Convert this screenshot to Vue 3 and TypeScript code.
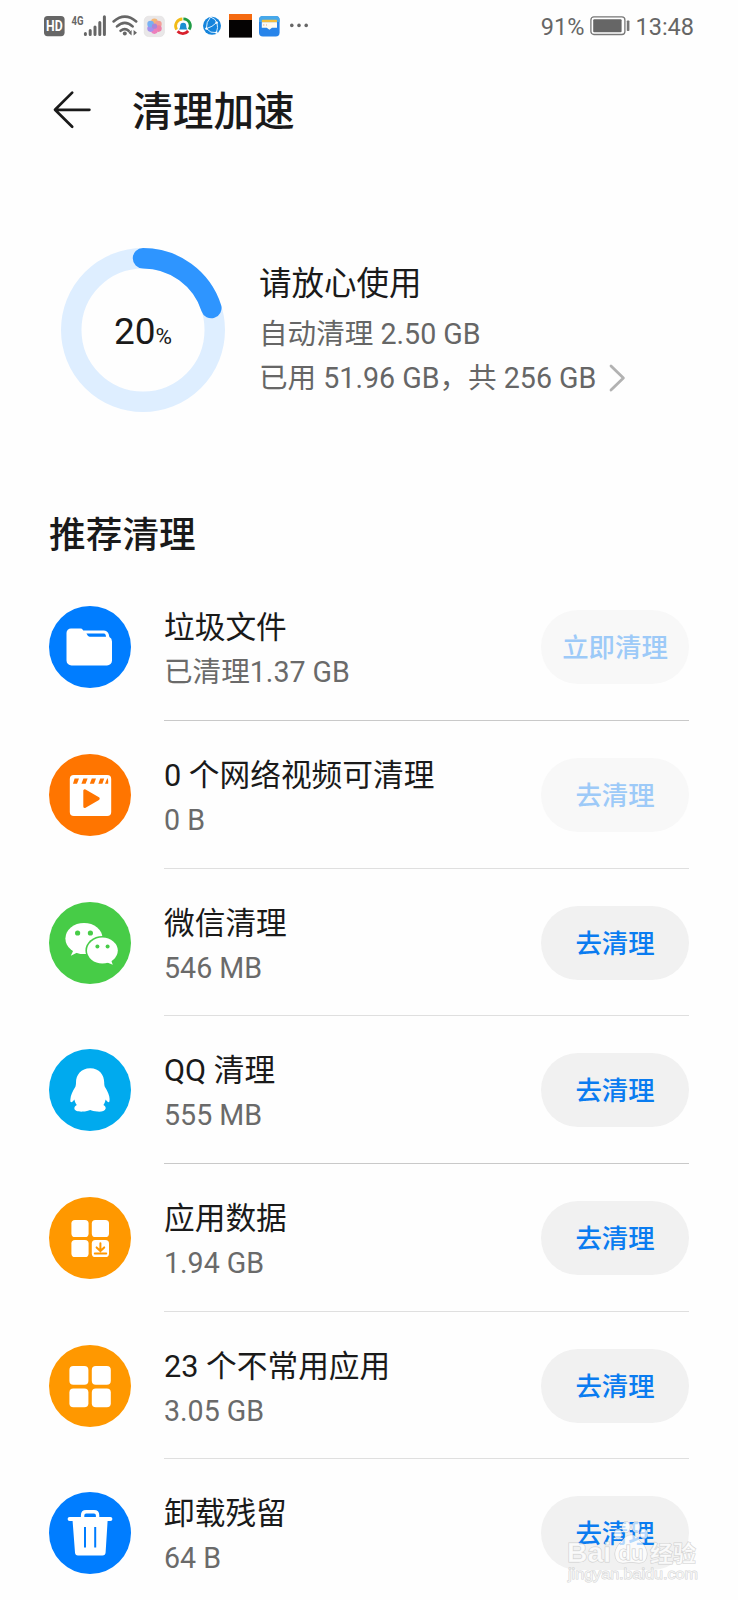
<script setup lang="ts">
interface CleanItem {
  id: string
  title: string
  size: string
  action: string
  color: string
  enabled: boolean
  softLine: boolean
}

const items: CleanItem[] = [
  { id: 'folder', title: '垃圾文件', size: '已清理1.37 GB', action: '立即清理', color: '#007dff', enabled: false, softLine: false },
  { id: 'video', title: '0 个网络视频可清理', size: '0 B', action: '去清理', color: '#ff7500', enabled: false, softLine: true },
  { id: 'wechat', title: '微信清理', size: '546 MB', action: '去清理', color: '#47cc47', enabled: true, softLine: true },
  { id: 'qq', title: 'QQ 清理', size: '555 MB', action: '去清理', color: '#00aaee', enabled: true, softLine: false },
  { id: 'data', title: '应用数据', size: '1.94 GB', action: '去清理', color: '#ff9800', enabled: true, softLine: true },
  { id: 'apps', title: '23 个不常用应用', size: '3.05 GB', action: '去清理', color: '#ff9800', enabled: true, softLine: true },
  { id: 'trash', title: '卸载残留', size: '64 B', action: '去清理', color: '#007dff', enabled: true, softLine: false },
]

const usedPercent = 20
const radius = 71.75
const circumference = 2 * Math.PI * radius
const dash = `${(circumference * usedPercent) / 100} ${circumference}`
</script>

<template>
  <div class="screen">
    <div class="status">
      <div class="tray">
        <svg width="26" height="28" viewBox="44 12 26 28">
          <rect x="44" y="16" width="20.6" height="20.2" rx="3.6" fill="#666" />
          <text x="46.1" y="31.3" class="hd" textLength="16.6" lengthAdjust="spacingAndGlyphs">HD</text>
        </svg>
        <svg width="40" height="28" viewBox="70 12 40 28">
          <text x="71.6" y="24.6" class="net" textLength="12" lengthAdjust="spacingAndGlyphs">4G</text>
          <g stroke="#666" stroke-width="3" stroke-linecap="round">
            <path d="M85.4 33.6v.8M90.2 30.6v3.8M95 27v7.4M99.8 22.4v12M104.4 16.8v17.6" />
          </g>
        </svg>
        <svg width="32" height="28" viewBox="110 12 32 28">
          <g fill="none" stroke="#666" stroke-width="2.6" stroke-linecap="round">
            <path d="M113.6 21.4q11.2-9.6 22.6 0M117 26.4q7.8-7 15.6 0M120.6 30.8q4.3-3.4 8 0" />
          </g>
          <circle cx="124.8" cy="33.4" r="2" fill="#666" />
          <path d="M128.400 32.800l3.200-2.800v5.600zM133.600 30l3.400 2.800-3.400 2.800z" fill="#666" />
        </svg>
        <svg width="28" height="28" viewBox="142 12 28 28">
          <rect x="144.2" y="16.2" width="20.2" height="20.4" rx="4.4" fill="#e9e7e8" stroke="#dcdada" stroke-width=".5" />
          <g opacity=".85">
            <circle cx="154.4" cy="21.8" r="3.3" fill="#f7ad62" />
            <circle cx="158.4" cy="24" r="3.3" fill="#f59389" />
            <circle cx="158.4" cy="28.6" r="3.3" fill="#ef6f9d" />
            <circle cx="154.4" cy="30.6" r="3.3" fill="#ee6db5" />
            <circle cx="150.6" cy="28.6" r="3.3" fill="#9b83ef" />
            <circle cx="150.6" cy="24" r="3.3" fill="#64a7f5" />
            <circle cx="154.5" cy="26.2" r="2.6" fill="#a176d6" />
          </g>
        </svg>
        <svg width="28" height="28" viewBox="170 12 28 28">
          <g fill="none" stroke-width="2.8">
            <path d="M176.6 29.6A7 7 0 0 1 182.4 19" stroke="#f2bb16" />
            <path d="M183.4 18.8A7 7 0 0 1 189.2 29.6" stroke="#1f9b45" />
            <path d="M177.6 31.2A7 7 0 0 0 188.2 31" stroke="#d8202c" />
          </g>
          <path d="M179 29.4q1.200-1 1.200-3.600a3 3 0 0 1 6 0q0 2.600 1.200 3.600z" fill="#1b8fd2" />
        </svg>
        <svg width="29" height="28" viewBox="198 12 29 28">
          <circle cx="212" cy="25.8" r="9" fill="#1584dc" />
          <g fill="none" stroke="#d9efff" stroke-width="1">
            <path d="M210.6 17q-4.6 5-4.2 11.600 4 5 10 4M210.600 17q5 1.600 6.400 6t-.6 9.600M206.400 28.600q6-1.600 10.200-6" />
          </g>
          <circle cx="206.400" cy="28.600" r="1.200" fill="#fff" />
          <circle cx="216.600" cy="22.600" r="1.200" fill="#fff" />
          <circle cx="216.400" cy="32.600" r="1.200" fill="#fff" />
        </svg>
        <svg width="29" height="28" viewBox="227 12 29 28">
          <rect x="229" y="14" width="23" height="23.600" fill="#050303" />
          <rect x="229" y="14" width="23" height="6" fill="#f56a10" />
        </svg>
        <svg width="30" height="28" viewBox="256 12 30 28">
          <rect x="259" y="16" width="20.600" height="20.400" rx="4" fill="#2784ea" />
          <path d="M259 22v-2a4 4 0 0 1 4-4h12.600a4 4 0 0 1 4 4v2z" fill="#46a8ea" />
          <rect x="261.800" y="19.800" width="15.200" height="2.600" rx="1" fill="#f3bd3e" />
          <path d="M261.800 22.200h15.200v5.600h-5l-2.600 2-2.600-2h-5z" fill="#fffaf0" />
          <path d="M263 25h1.400M266 25h1" stroke="#e0a78c" stroke-width="1" />
        </svg>
        <svg width="26" height="28" viewBox="286 12 26 28">
          <g fill="#666">
            <circle cx="291.800" cy="25.400" r="1.800" />
            <circle cx="299" cy="25.400" r="1.800" />
            <circle cx="306.200" cy="25.400" r="1.800" />
          </g>
        </svg>
      </div>
      <div class="power">
        <span class="battery-text">91%</span>
        <svg class="battery" width="40" height="20" viewBox="0 0 40 20">
          <rect x=".9" y=".9" width="34" height="17.600" rx="3" fill="#fff" stroke="#777" stroke-width="1.300" />
          <rect x="3.200" y="3.200" width="28.400" height="13" rx="1" fill="#666" />
          <rect x="36.800" y="4.400" width="2.600" height="10.600" rx=".8" fill="#777" />
        </svg>
        <span class="time">13:48</span>
      </div>
    </div>

    <header class="header">
      <svg class="back" width="40" height="40" viewBox="0 0 40 40">
        <path d="M37.400 19.800H3.200M20.200 2.600L3 19.800l17.200 17" fill="none" stroke="#1a1a1a" stroke-width="2.700" stroke-linecap="round" stroke-linejoin="round" />
      </svg>
      <h1>清理加速</h1>
    </header>

    <section class="summary">
      <div class="gauge">
        <svg width="164" height="164" viewBox="0 0 164 164">
          <circle cx="82" cy="82" :r="radius" fill="none" stroke="#deeeff" stroke-width="20.500" />
          <circle cx="82" cy="82" :r="radius" fill="none" stroke="#2e95ff" stroke-width="20.500" stroke-linecap="round" :stroke-dasharray="dash" transform="rotate(-90 82 82)" />
        </svg>
        <div class="gauge-label"><span class="num">{{ usedPercent }}</span><span class="pct">%</span></div>
      </div>
      <div class="facts">
        <div class="headline">请放心使用</div>
        <div class="fact">自动清理 2.50 GB</div>
        <div class="fact">
          <span>已用 51.96 GB，共 256 GB</span>
          <svg class="chevron" width="17" height="28" viewBox="0 0 17 28">
            <path d="M2 2l12.400 12L2 26" fill="none" stroke="#b2b2b2" stroke-width="2.800" stroke-linecap="round" stroke-linejoin="round" />
          </svg>
        </div>
      </div>
    </section>

    <h2>推荐清理</h2>

    <ul class="list">
      <li v-for="item in items" :key="item.id" class="row">
        <svg class="icon" width="82" height="82" viewBox="0 0 82 82">
          <circle cx="41" cy="41" r="41" :fill="item.color" />
          <g v-if="item.id === 'folder'">
            <path d="M17.500 27a4.500 4.500 0 0 1 4.500-4.500h9.500q1.600 0 2.400 1.400l.4.600H55q4.600 0 5.400 6.500 2.600 1.200 2.600 4.500v19a5 5 0 0 1-5 5H22.500a5 5 0 0 1-5-5z" fill="#fff" />
            <path d="M37.400 27.600H55q1.600 0 2 3.200H40.600q-1.800-.2-3.200-3.200z" fill="#007dff" />
          </g>
          <g v-else-if="item.id === 'video'">
            <rect x="20.800" y="21" width="41.400" height="41" rx="4" fill="#fff" />
            <path d="M25.600 24.600h4.400l-2 5.200h-4zM34.400 24.600h4.200l-2 5.200h-4.200zM42.800 24.600H47l-2 5.200h-4.200zM51.200 24.600h4l-1.800 5.200h-4zM58.200 24.600h.6q.6 2.400.400 5.200H56z" fill="#ff7500" />
            <path d="M35.800 36.800v15.600l13.400-7.800z" fill="#ff7500" stroke="#ff7500" stroke-width="3" stroke-linejoin="round" />
          </g>
          <g v-else-if="item.id === 'wechat'">
            <ellipse cx="35" cy="36.500" rx="18.600" ry="15.600" fill="#fff" />
            <path d="M25 47l-3.200 6.800 8-4z" fill="#fff" />
            <ellipse cx="53.400" cy="48.600" rx="17" ry="14.600" fill="#47cc47" />
            <ellipse cx="53.400" cy="48.600" rx="15.400" ry="13" fill="#fff" />
            <path d="M57 60l6.800 2.800-2.400-6.600z" fill="#fff" />
            <g fill="#47cc47">
              <circle cx="28.600" cy="31" r="2.600" /><circle cx="41.400" cy="31" r="2.600" />
              <circle cx="48.400" cy="44.400" r="2" /><circle cx="58.600" cy="44.400" r="2" />
            </g>
          </g>
          <g v-else-if="item.id === 'qq'">
            <path d="M41.200 19.200c9.200 0 14 6.600 14 14.400 0 1.800.2 3 .6 4.200 2.800 4 4.800 9 4.800 12.200 0 2-.2 3.200-.8 3.200-.8 0-2.200-1.400-3.200-2.800-.4 2-1 4-2.200 5.600 1.800 1 2.600 2.200 2.200 3.800-.6 2.200-4.400 3.200-8.400 2.800-3-.2-5.200-1-7-1.600-1.800.8-4.200 1.600-7.600 1.600-4 .2-7.800-.6-8.200-2.800-.2-1.800.8-3 2.400-3.800-1.200-1.600-2-3.600-2.400-5.600-1 1.600-2.400 2.800-3.200 2.800s-1-1.200-.8-3c.2-3.400 2.200-8.200 5-12.400.4-1.200.6-2.400.6-4.200 0-7.800 5-14.400 14.200-14.400z" fill="#fff" />
          </g>
          <g v-else-if="item.id === 'data'">
            <g fill="#fff">
              <rect x="22.400" y="23" width="17.200" height="17" rx="3.600" />
              <rect x="42.800" y="23" width="17.200" height="17" rx="3.600" />
              <rect x="22.400" y="43" width="17.200" height="17" rx="3.600" />
              <rect x="42.800" y="43" width="17.200" height="17" rx="3.600" />
            </g>
            <path d="M51.400 46.200v7M47.600 50.400l3.800 3.600 3.800-3.600M45.800 56.600h11.400" fill="none" stroke="#ff9800" stroke-width="2" stroke-linecap="round" />
          </g>
          <g v-else-if="item.id === 'apps'" fill="#fff">
            <rect x="20.400" y="21" width="19" height="18.800" rx="4" />
            <rect x="42.800" y="21" width="19" height="18.800" rx="4" />
            <rect x="20.400" y="43.400" width="19" height="18.800" rx="4" />
            <rect x="42.800" y="43.400" width="19" height="18.800" rx="4" />
          </g>
          <g v-else>
            <path d="M20.600 25h40.800a2 2 0 0 1 0 4h-2.800l-2 31.600q-.2 3-3.200 3H29q-2.800 0-3-3L23.600 29h-3a2 2 0 0 1 0-4z" fill="#fff" />
            <path d="M33.600 26v-2.600q0-3.600 3.600-3.600h7.800q3.600 0 3.600 3.600V26" fill="none" stroke="#fff" stroke-width="3.400" />
            <path d="M36 35v20.600M46.200 35v20.600" stroke="#007dff" stroke-width="2" />
          </g>
        </svg>
        <div class="body" :class="{ soft: item.softLine }">
          <div class="info">
            <div class="title">{{ item.title }}</div>
            <div class="size">{{ item.size }}</div>
          </div>
          <button class="action" :class="{ disabled: !item.enabled }" type="button">{{ item.action }}</button>
        </div>
      </li>
    </ul>

    <svg class="watermark" width="140" height="70" viewBox="0 0 140 70">
      <g fill="#fff" fill-opacity=".7" stroke="#aaa" stroke-opacity=".5" stroke-width="1" paint-order="stroke">
        <ellipse cx="64" cy="6" rx="4" ry="5.400" />
        <ellipse cx="74" cy="6" rx="4" ry="5.400" />
        <ellipse cx="56" cy="13" rx="3.600" ry="4.800" />
        <ellipse cx="82" cy="13" rx="3.600" ry="4.800" />
        <path d="M69 14q5 0 8 5 8 7 8 14 0 9-8 9-8-1.400-16 0-8 0-8-9 0-7 8-14 3-5 8-5z" />
        <text x="5" y="41" class="wm-brand" textLength="44" lengthAdjust="spacingAndGlyphs">Bai</text>
        <text x="56.500" y="38.500" class="wm-du" textLength="25" lengthAdjust="spacingAndGlyphs">du</text>
        <text x="88" y="41" class="wm-cn" textLength="46" lengthAdjust="spacingAndGlyphs">经验</text>
        <text x="6" y="57.500" class="wm-url" textLength="130" lengthAdjust="spacingAndGlyphs">jingyan.baidu.com</text>
      </g>
    </svg>
  </div>
</template>

<style>
html,
body {
  margin: 0;
  background: #fefefe;
}
</style>

<style scoped>
.screen {
  position: relative;
  box-sizing: border-box;
  width: 738px;
  height: 1600px;
  overflow: hidden;
  background: #fefefe;
  color: #1a1a1a;
  font-family: Roboto, "Noto Sans CJK SC", sans-serif;
}
svg {
  display: block;
  flex: none;
}
.status {
  display: flex;
  justify-content: space-between;
  height: 52px;
  padding: 0 44px;
  color: #666;
}
.tray {
  display: flex;
  padding-top: 12px;
}
.hd {
  font: 700 15px Roboto, sans-serif;
  fill: #fff;
}
.net {
  font: 700 12px Roboto, sans-serif;
  fill: #666;
}
.power {
  display: flex;
  align-items: center;
  font-size: 23.500px;
  line-height: 52px;
}
.battery-text {
  padding-top: 1px;
}
.time {
  padding-top: 1px;
}
.battery {
  margin: 0 5px 0 6px;
}
.header {
  display: flex;
  align-items: center;
  height: 116px;
  padding-left: 52px;
}
.back {
  margin: -1px 40px 0 0;
}
h1,
h2 {
  margin: 0;
  font-weight: 500;
}
h1 {
  padding-top: 4px;
  font-size: 40.700px;
  line-height: 60px;
}
.summary {
  display: flex;
  align-items: center;
  height: 324px;
  padding-left: 61px;
}
.gauge {
  display: grid;
  place-items: center;
  width: 164px;
  height: 164px;
}
.gauge > * {
  grid-area: 1 / 1;
}
.gauge-label {
  display: flex;
  align-items: baseline;
  padding-top: 8px;
  line-height: 44px;
}
.num {
  font-size: 37px;
}
.pct {
  font-size: 22.500px;
}
.facts {
  margin-left: 34px;
  padding-bottom: 4px;
}
.headline {
  font-size: 32.500px;
  line-height: 56px;
}
.fact {
  display: flex;
  align-items: center;
  height: 44px;
  color: #666;
  font-size: 28.600px;
  line-height: 44px;
}
.chevron {
  margin-left: 13px;
}
h2 {
  height: 81.400px;
  padding-left: 49px;
  font-size: 36.700px;
  line-height: 88px;
}
.list {
  display: grid;
  grid-auto-rows: 147.670px;
  margin: 0;
  padding: 0 49px;
  list-style: none;
}
.row {
  display: flex;
  align-items: center;
}
.body {
  display: flex;
  flex: 1;
  align-items: center;
  justify-content: space-between;
  box-sizing: border-box;
  height: 100%;
  margin-left: 33px;
  border-bottom: 1px solid #c9c9c9;
}
.body.soft {
  border-color: #dfdfdf;
}
.info {
  padding-top: 7px;
}
.title {
  font-size: 30.700px;
  line-height: 44px;
}
.size {
  color: #6a6a6a;
  font-size: 28.600px;
  line-height: 44px;
}
.action {
  width: 148px;
  height: 74px;
  margin-top: 1px;
  padding: 3px 0 0;
  border: 0;
  border-radius: 37px;
  background: #f1f1f1;
  color: #0a7cf0;
  font-family: inherit;
  font-size: 26.400px;
  font-weight: 500;
  line-height: 71px;
}
.action.disabled {
  background: #f8f8f8;
  color: #9dcaf8;
}
.watermark {
  position: absolute;
  left: 562px;
  top: 1521px;
}
.wm-brand,
.wm-du {
  font: 700 28px "Liberation Sans", sans-serif;
}
.wm-du {
  font-size: 21px;
  stroke: #999;
}
.wm-cn {
  font: 700 23px "Noto Sans CJK SC", sans-serif;
}
.wm-url {
  font: 400 15px "Liberation Sans", sans-serif;
}
</style>
